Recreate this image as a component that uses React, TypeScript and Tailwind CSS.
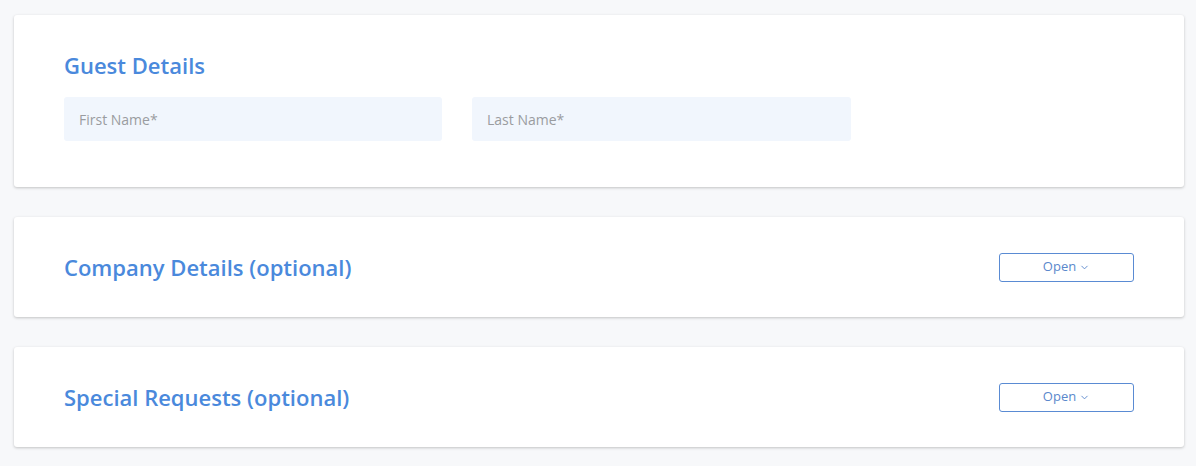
import { ChevronDown } from "lucide-react";

const font = { fontFamily: '"Open Sans", "Noto Sans", sans-serif' };

function CollapsedCard({ title }: { title: string }) {
  return (
    <div className="flex h-[100px] items-center justify-between rounded-[3px] bg-white px-[50px] shadow-[0_1px_3px_rgba(0,0,0,0.22)]">
      <h2 className="text-[22px] font-semibold leading-[30px] text-[#4a89dc]">{title}</h2>
      <button className="flex h-[29px] w-[135px] items-center justify-center gap-[3px] rounded-[3px] border border-[#5a8bd3] text-[13px] text-[#5a88cc]">
        Open
        <ChevronDown size={11} strokeWidth={2} className="mt-[1px]" />
      </button>
    </div>
  );
}

export default function App() {
  return (
    <div className="min-h-[466px] bg-[#f7f8fa] pl-[14px] pr-[12px] pt-[15px] pb-[18px]" style={font}>
      <div className="flex flex-col gap-[30px]">
        <div className="rounded-[3px] bg-white px-[50px] pt-[35px] pb-[46px] shadow-[0_1px_3px_rgba(0,0,0,0.22)]">
          <h2 className="text-[22px] font-semibold leading-[30px] text-[#4a89dc]">Guest Details</h2>
          <div className="mt-[17px] flex gap-[30px]">
            <input
              placeholder="First Name*"
              className="h-[44px] w-[378px] rounded-[3px] bg-[#f1f6fd] px-[15px] text-[14px] text-gray-700 outline-none placeholder:text-[#9a9ca0]"
            />
            <input
              placeholder="Last Name*"
              className="h-[44px] w-[379px] rounded-[3px] bg-[#f1f6fd] px-[15px] text-[14px] text-gray-700 outline-none placeholder:text-[#9a9ca0]"
            />
          </div>
        </div>
        <CollapsedCard title="Company Details (optional)" />
        <CollapsedCard title="Special Requests (optional)" />
      </div>
    </div>
  );
}
